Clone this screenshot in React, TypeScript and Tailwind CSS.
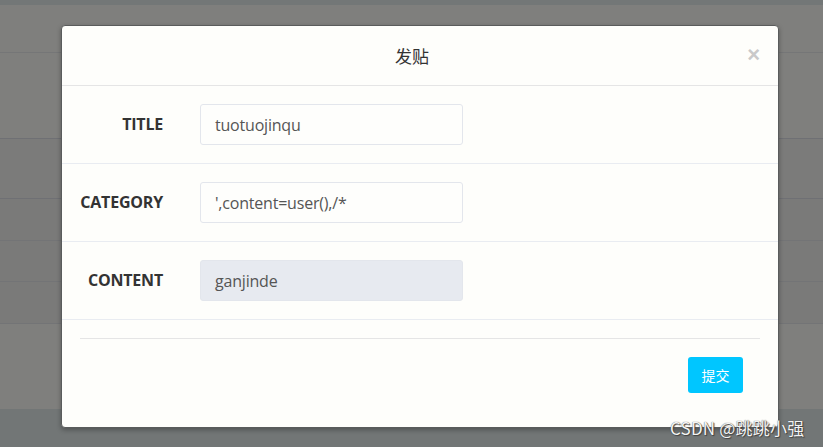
import React from "react";

export default function App() {
  const rows = [
    { label: "TITLE", value: "tuotuojinqu", bg: "bg-[#fefefc]" },
    { label: "CATEGORY", value: "',content=user(),/*", bg: "bg-[#fefefc]" },
    { label: "CONTENT", value: "ganjinde", bg: "bg-[#e7eaf0]" },
  ];
  return (
    <div className="relative w-[823px] h-[447px] overflow-hidden bg-[#727676] font-['Open_Sans','Noto_Sans_CJK_SC',sans-serif]">
      <div className="flex flex-col">
        <div className="h-[5px] bg-[#737777]" />
        <div className="h-[48px] bg-[#7f7f7d] border-b border-[#757677]" />
        <div className="h-[86px] bg-[#7f7f7d] border-b border-[#6f7074]" />
        <div className="h-[60px] bg-[#7b7b7a] border-b border-[#6f7074]" />
        <div className="h-[42px] bg-[#7a7a79] border-b border-[#737476]" />
        <div className="h-[41px] bg-[#7a7a79] border-b border-[#737476]" />
        <div className="h-[42px] bg-[#7a7a79] border-b border-[#737476]" />
        <div className="h-[85px] bg-[#7f7f7d]" />
      </div>

      <div className="absolute left-[61px] top-[25px] w-[718px] h-[403px] rounded-[4px] bg-[#fefefb] border border-[#5a5c5c] shadow-[0_2px_5px_rgba(0,0,0,0.3)] flex flex-col">
        <div className="relative h-[60px] shrink-0 border-b border-[#e5e5e5] flex items-center justify-center pr-[16px]">
          <span className="text-[17px] text-[#333] font-['Noto_Sans_CJK_SC',sans-serif]">发贴</span>
          <span className="absolute right-[18px] top-[18px] text-[22px] leading-none font-bold text-[#c9c9c9] font-['Liberation_Sans',sans-serif]">×</span>
        </div>
        {rows.map((r) => (
          <div key={r.label} className="flex items-center py-[18px] border-b border-[#e9ecf1]">
            <div className="w-[101px] shrink-0 text-right text-[16px] font-bold text-[#333] tracking-[-0.2px] -translate-y-[1px]">{r.label}</div>
            <div className={`ml-[37px] w-[263px] h-[41px] rounded-[3px] border border-[#e3e6ec] ${r.bg} flex items-center pl-[14px] text-[16px] text-[#555] tracking-[-0.2px]`}>
              {r.value}
            </div>
          </div>
        ))}
        <div className="mx-[18px] mt-[18px] border-t border-[#e5e5e5]" />
        <div className="flex justify-end pr-[35px] pt-[18px]">
          <button className="w-[55px] h-[36px] rounded-[3px] bg-[#00c6ff] text-white text-[14px] font-['Noto_Sans_CJK_SC',sans-serif]">提交</button>
        </div>
      </div>

      <div className="absolute left-[670px] top-[415px] text-[17px] text-[#f4f4f4] font-['Noto_Sans_CJK_SC',sans-serif] [text-shadow:0_0_1px_#333,1px_1px_1px_#444] tracking-[0.2px]">
        CSDN @跳跳小强
      </div>
    </div>
  );
}
